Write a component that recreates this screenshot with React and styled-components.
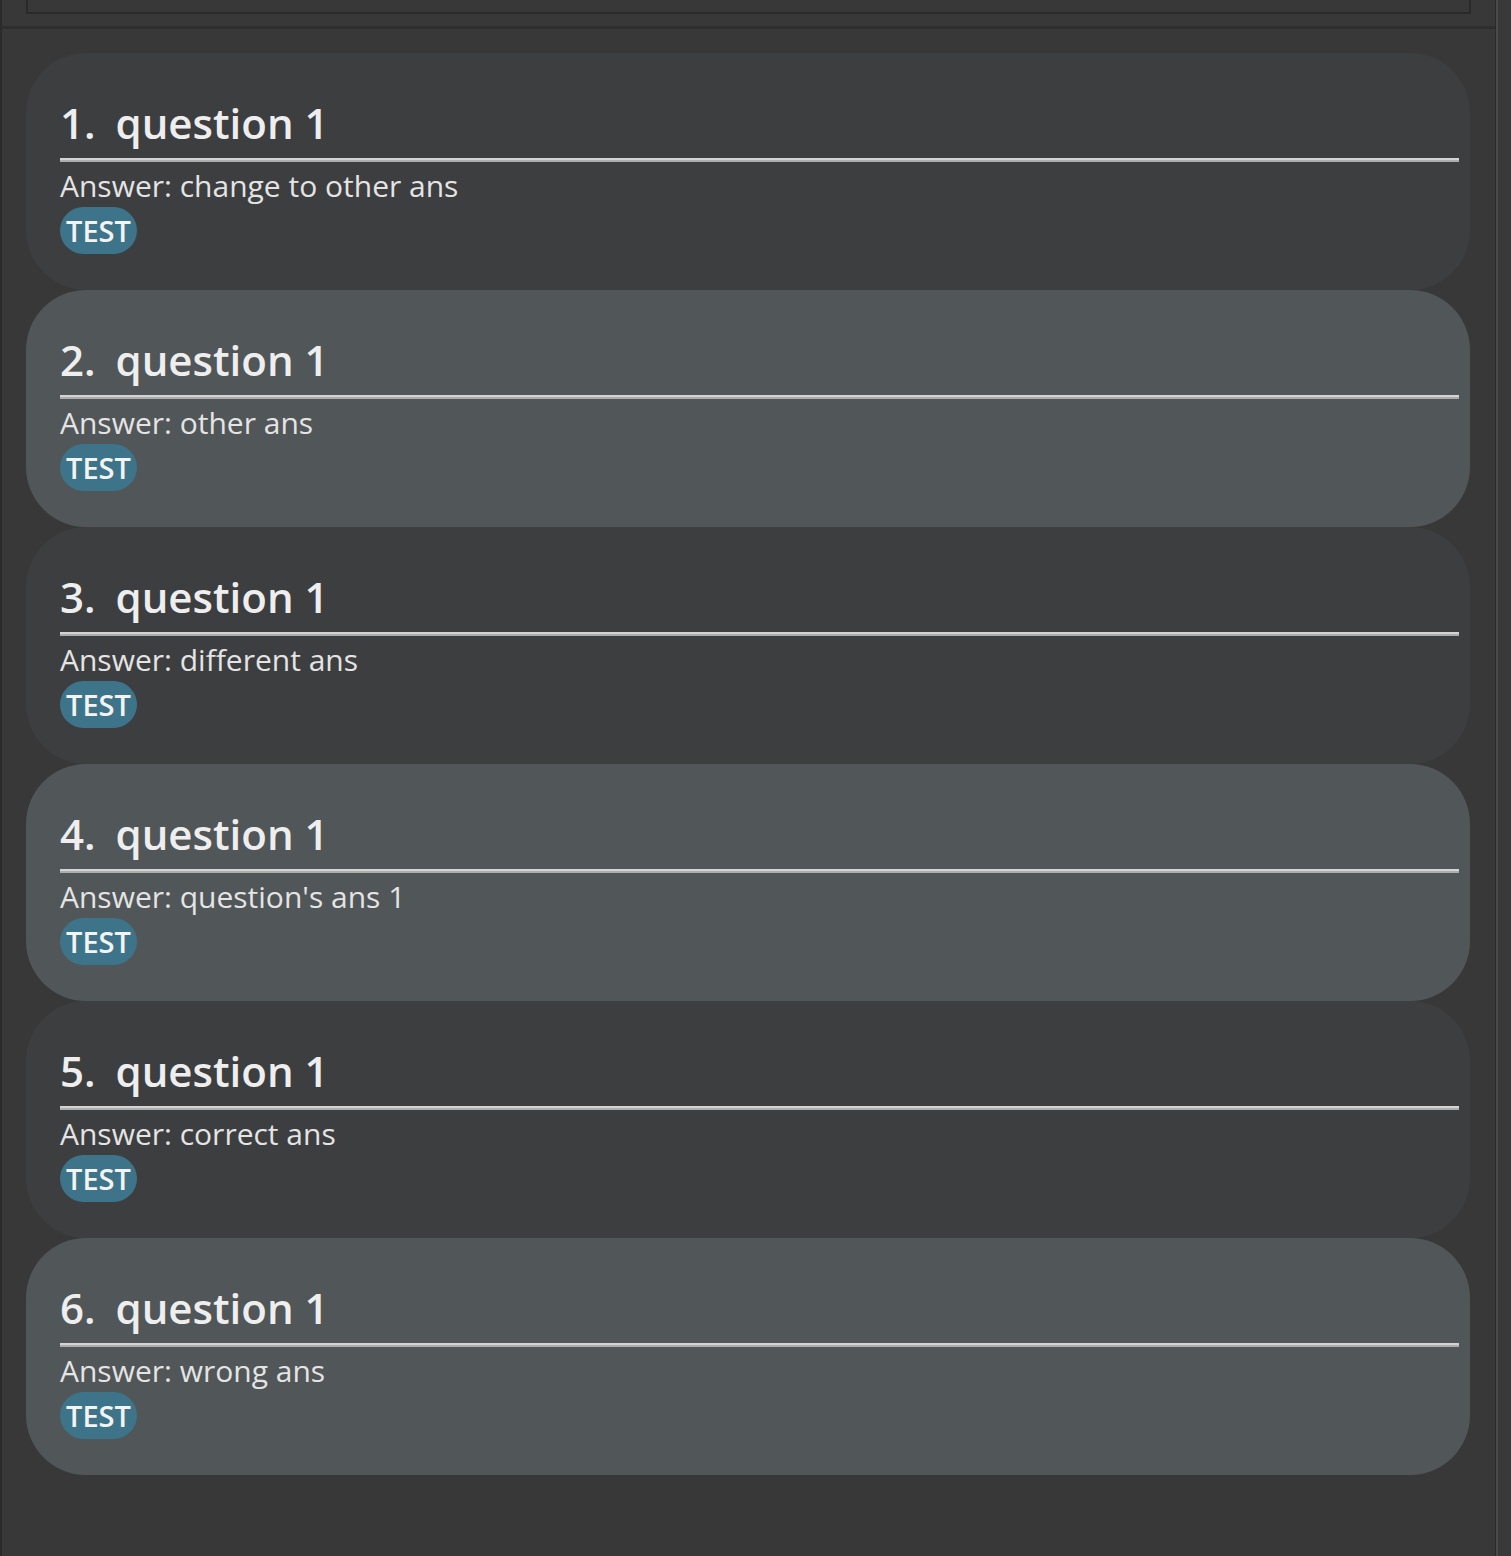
import React from 'react';
import styled, { createGlobalStyle } from 'styled-components';

const GlobalStyle = createGlobalStyle`
	body {
		margin: 0;
		background-color: #383838;
		font-family: 'Open Sans', 'Noto Sans', sans-serif;
	}
`;

const Page = styled.div`
	display: flex;
	flex-direction: row;
	height: 1556px;
	overflow: hidden;
	background-color: #383838;
`;

const Main = styled.div`
	flex: 1;
	display: flex;
	flex-direction: column;
	border-left: 2px solid #2b2b2b;
`;

const TopBar = styled.div`
	height: 26px;
	padding: 0 24px;
	border-bottom: 3px solid #2e2e2e;
`;

const TopBox = styled.div`
	height: 12px;
	border: 2px solid #2a2a2a;
	border-top: 0;
`;

const List = styled.div`
	display: flex;
	flex-direction: column;
	padding: 24px 25px 0 24px;
`;

const Card = styled.div`
	height: 237px;
	box-sizing: border-box;
	padding: 44px 11px 0 34px;
	border-radius: 60px;
	background-color: ${props => (props.alt ? '#515658' : '#3d3e40')};
	display: flex;
	flex-direction: column;
	align-items: flex-start;
`;

const Title = styled.div`
	display: flex;
	flex-direction: row;
	gap: 20px;
	font-size: 42px;
	line-height: 52px;
	font-weight: 600;
	color: #eeeeee;
	padding-bottom: 9px;
	white-space: nowrap;
`;

const Divider = styled.div`
	align-self: stretch;
	height: 4px;
	background: linear-gradient(#d4d4d4 50%, #adadad 50%);
`;

const Answer = styled.div`
	margin-top: 6px;
	font-size: 30px;
	line-height: 36px;
	color: #e4e4e4;
	white-space: nowrap;
`;

const Tag = styled.span`
	margin-top: 3px;
	width: 77px;
	height: 47px;
	border-radius: 24px;
	background-color: #3e7489;
	color: #f3f3f3;
	font-size: 29px;
	font-weight: 600;
	display: flex;
	align-items: center;
	justify-content: center;
	line-height: 1;
`;

const Scroll = styled.div`
	width: 15px;
	border-left: 1px solid #2a2a2a;
	box-shadow: inset 2px 0 0 #4a4a4a;
	background-color: #393939;
`;

const questions = [
	{ q: 'question 1', a: 'change to other ans' },
	{ q: 'question 1', a: 'other ans' },
	{ q: 'question 1', a: 'different ans' },
	{ q: 'question 1', a: "question's ans 1" },
	{ q: 'question 1', a: 'correct ans' },
	{ q: 'question 1', a: 'wrong ans' },
];

const App = () => {
	return (
		<>
			<GlobalStyle />
			<Page>
				<Main>
					<TopBar>
						<TopBox />
					</TopBar>
					<List>
						{questions.map((item, i) => (
							<Card key={i} alt={i % 2 === 1}>
								<Title>
									<span>{i + 1}.</span>
									<span>{item.q}</span>
								</Title>
								<Divider />
								<Answer>Answer: {item.a}</Answer>
								<Tag>TEST</Tag>
							</Card>
						))}
					</List>
				</Main>
				<Scroll />
			</Page>
		</>
	);
};

export default App;
